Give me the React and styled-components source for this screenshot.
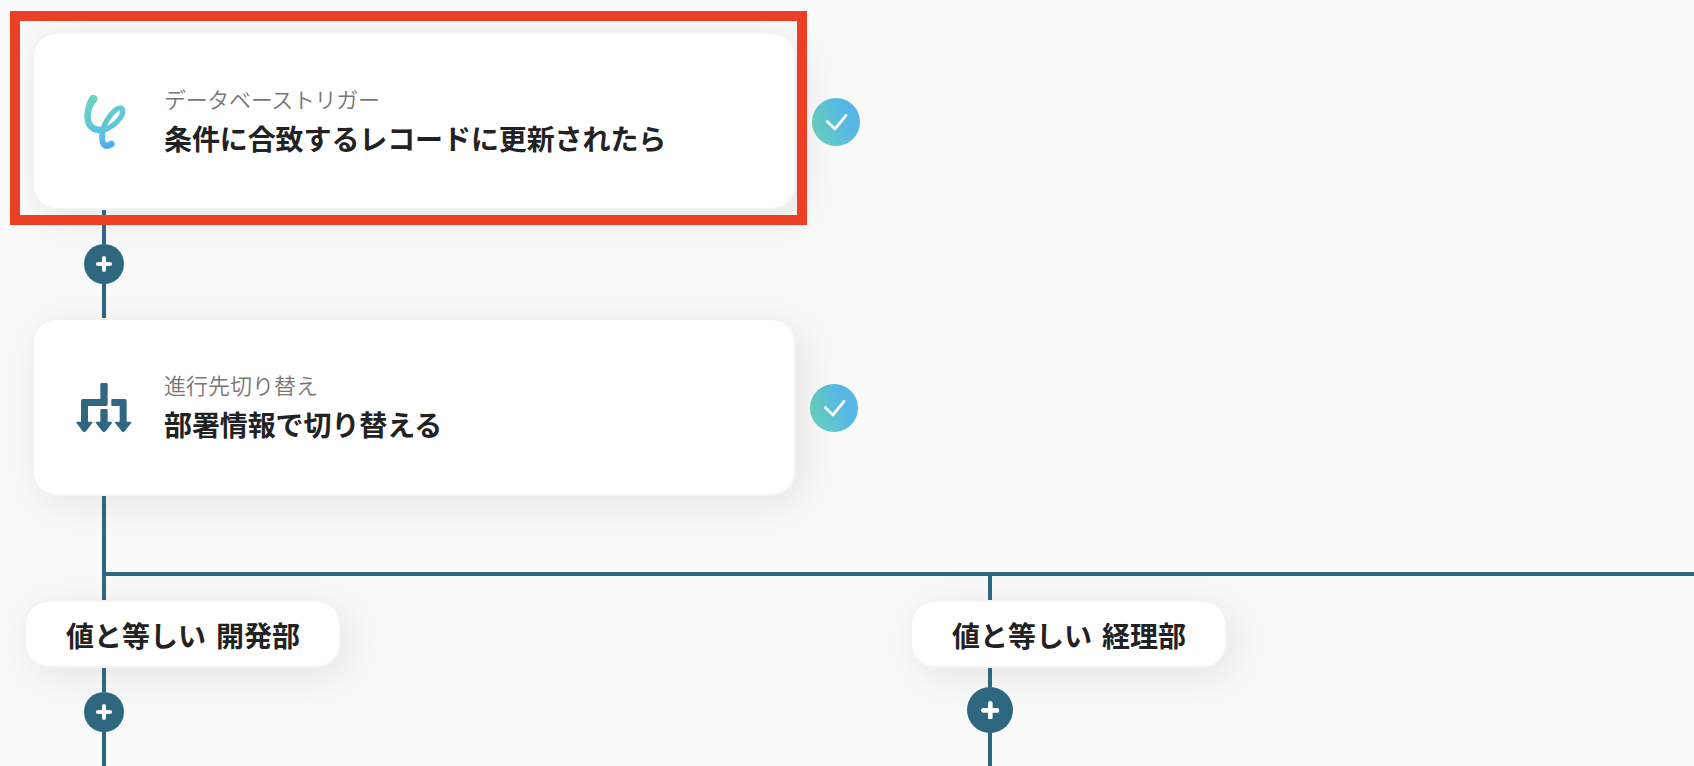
import React from 'react';
import styled, { createGlobalStyle } from 'styled-components';

const steps = [
  {
    id: 'trigger',
    kind: 'データベーストリガー',
    title: '条件に合致するレコードに更新されたら',
    icon: <TriggerIcon />,
    gap: 16,
    tracking: -0.33,
    selected: true,
  },
  {
    id: 'switch',
    kind: '進行先切り替え',
    title: '部署情報で切り替える',
    icon: <SwitchIcon />,
    gap: 14,
    tracking: 0,
  },
];

const branches = [
  { id: 'dev', label: '値と等しい 開発部', size: 40, lead: 24 },
  { id: 'accounting', label: '値と等しい 経理部', size: 46.6, lead: 18.7 },
];

function TriggerIcon() {
  return (
    <svg width="44" height="56" viewBox="246 282 132 168" fill="none">
      <defs>
        <linearGradient id="trigger" x1="270" y1="290" x2="325" y2="445" gradientUnits="userSpaceOnUse">
          <stop offset="0" stopColor="#69d4bd" />
          <stop offset="0.5" stopColor="#5fc8d6" />
          <stop offset="0.75" stopColor="#5bc0e2" />
          <stop offset="1" stopColor="#4fa8f5" />
        </linearGradient>
      </defs>
      <path fill="url(#trigger)" d="M269 291C258 308 253 330 253 352L272 352C272 332 280 316 290 304A12 12 0 0 0 269 291Z" />
      <g stroke="url(#trigger)" strokeLinecap="round" strokeLinejoin="round">
        <path strokeWidth="24" d="M280 297L280 297.1" />
        <path strokeWidth="19" d="M262.5 350C263 377 278 390 300 390" />
        <path
          strokeWidth="15.5"
          d="M298 391.5C336 391 368.5 351 368.5 333C368.5 322 356 321 346 330C327 346 309 374 307 404"
        />
        <path strokeWidth="18" d="M307 396C305 424 308 437 320 437" />
        <path strokeWidth="20" d="M320 436.5C327 436.5 330 434 334 432" />
      </g>
    </svg>
  );
}

function SwitchIcon() {
  return (
    <svg width="56" height="50" viewBox="49 39 168 150" fill="#2f6680">
      <path d="M122 43q0-4 4-4h14q4 0 4 4v60q0 5-5 5H85v47h10q6 0 2 5L79 184q-5 5-10 0L51 160q-3-5 3-5h10V93q0-6 6-6h52z" />
      <path d="M158 87h37q6 0 6 6v62h10q6 0 3 5l-19 24q-4 5-9 0l-19-24q-4-5 3-5h10v-47h-22q-3 0-3-3V90q0-3 3-3z" />
      <path d="M126 117h14q4 0 4 4v34h9q6 0 3 5l-18 24q-5 5-10 0l-19-24q-3-5 3-5h10v-34q0-4 4-4z" />
    </svg>
  );
}

function StatusCheck() {
  return (
    <Status>
      <svg width="24" height="20" viewBox="0 0 24 20" fill="none">
        <path d="M3.2 9.6L11 16.9L22 3.4" stroke="#fff" strokeWidth="2.8" strokeLinecap="round" strokeLinejoin="round" />
      </svg>
    </Status>
  );
}

function AddButton({ size }) {
  return (
    <Add $size={size}>
      <svg width="40%" height="40%" viewBox="0 0 16 16">
        <path d="M8 2v12M2 8h12" stroke="#fff" strokeWidth="4" strokeLinecap="round" />
      </svg>
    </Add>
  );
}

export default function App() {
  return (
    <Canvas>
      <GlobalStyle />
      {steps.map((step, i) => (
        <React.Fragment key={step.id}>
          {i > 0 && (
            <Connector $left={84} $height={108}>
              <Line />
              <AddButton size={40} />
              <Line />
            </Connector>
          )}
          <StepRow $gap={step.gap}>
            <Card>
              <IconBox>{step.icon}</IconBox>
              <div>
                <Kind $tracking={step.tracking}>{step.kind}</Kind>
                <Title>{step.title}</Title>
              </div>
              {step.selected && <Frame />}
            </Card>
            <StatusCheck />
          </StepRow>
        </React.Fragment>
      ))}
      <Connector $left={84} $height={76}>
        <Line />
      </Connector>
      <Rail />
      <Branches>
        {branches.map((branch) => (
          <div key={branch.id}>
            <Connector $left={60} $height={24}>
              <Line />
            </Connector>
            <Chip>{branch.label}</Chip>
            <Connector $left={60} $height={98}>
              <Line $height={branch.lead} />
              <AddButton size={branch.size} />
              <Line />
            </Connector>
          </div>
        ))}
      </Branches>
    </Canvas>
  );
}

const GlobalStyle = createGlobalStyle`
  * {
    box-sizing: border-box;
  }
  body {
    margin: 0;
    background: #fafafa;
    font-family: "Noto Sans CJK JP", sans-serif;
    color: #222;
  }
`;

const Canvas = styled.div`
  height: 766px;
  overflow: hidden;
  padding-top: 32px;
  background: #fafafa;
`;

const StepRow = styled.div`
  display: flex;
  align-items: center;
  gap: ${(props) => props.$gap}px;
  margin-left: 32px;
`;

const Card = styled.div`
  position: relative;
  display: flex;
  align-items: center;
  gap: 30px;
  width: 764px;
  height: 178px;
  padding: 2px 40px 0;
  border: 2px solid #f3f3f3;
  border-radius: 24px;
  background: #fff;
  box-shadow: 8px 8px 40px rgba(0, 0, 0, 0.09);
`;

const Frame = styled.div`
  position: absolute;
  z-index: 2;
  top: -23px;
  left: -24px;
  width: 797px;
  height: 214px;
  border: 10px solid #eb4025;
`;

const IconBox = styled.div`
  display: flex;
  align-items: center;
  justify-content: center;
  width: 60px;
  height: 60px;
`;

const Kind = styled.div`
  font-size: 22px;
  line-height: 32px;
  letter-spacing: ${(props) => props.$tracking}px;
  color: #777;
  font-weight: 350;
`;

const Title = styled.div`
  font-size: 28px;
  font-weight: 700;
  line-height: 48px;
  letter-spacing: -0.1px;
  white-space: nowrap;
`;

const Status = styled.div`
  display: flex;
  align-items: center;
  justify-content: center;
  width: 48px;
  height: 48px;
  margin-top: 2px;
  border-radius: 50%;
  background: linear-gradient(70deg, #69d6bd 5%, #56b6e6 70%);
`;

const Connector = styled.div`
  position: relative;
  display: flex;
  flex-direction: column;
  align-items: center;
  width: 40px;
  height: ${(props) => props.$height}px;
  margin-left: ${(props) => props.$left}px;
`;

const Line = styled.div`
  width: 4px;
  flex: ${(props) => (props.$height ? `0 0 ${props.$height}px` : '1')};
  background: #2f6680;
`;

const Add = styled.div`
  display: flex;
  flex: none;
  align-items: center;
  justify-content: center;
  width: ${(props) => props.$size}px;
  height: ${(props) => props.$size}px;
  border-radius: 50%;
  background: #2f6680;
`;

const Rail = styled.div`
  height: 4px;
  margin-left: 102px;
  background: #2f6680;
`;

const Branches = styled.div`
  display: grid;
  grid-template-columns: 886px 1fr;
  margin-left: 24px;
`;

const Chip = styled.div`
  display: flex;
  align-items: center;
  justify-content: center;
  width: 317px;
  height: 68px;
  padding: 1px 0 0 1px;
  border: 2px solid #f3f3f3;
  border-radius: 24px;
  background: #fff;
  box-shadow: 8px 8px 40px rgba(0, 0, 0, 0.09);
  font-size: 28px;
  font-weight: 700;
  word-spacing: 3.5px;
  white-space: nowrap;
`;
